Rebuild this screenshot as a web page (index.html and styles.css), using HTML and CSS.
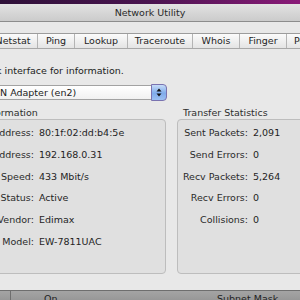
FILE: index.html
```html
<!DOCTYPE html>
<html>
<head>
<meta charset="utf-8">
<link rel="stylesheet" href="styles.css">
</head>
<body>
<div class="desktop"></div>
<div class="titlebar"><span class="title">Network Utility</span></div>
<div class="window-body">
  <div class="tabs">
    <div class="tab tab-netstat">Netstat</div>
    <div class="tab tab-ping">Ping</div>
    <div class="tab tab-lookup">Lookup</div>
    <div class="tab tab-trace">Traceroute</div>
    <div class="tab tab-whois">Whois</div>
    <div class="tab tab-finger">Finger</div>
    <div class="tab tab-port">Port Scan</div>
  </div>
  <p class="prompt">k interface for information.</p>
  <div class="popup">
    <span class="popup-text">N Adapter (en2)</span>
    <span class="stepper">
      <svg width="14" height="13" viewBox="0 0 14 13"><path d="M7 2.5 L9.5 5.5 L4.5 5.5 Z" fill="#111"/><path d="M7 10.5 L9.5 7.5 L4.5 7.5 Z" fill="#111"/></svg>
    </span>
  </div>
  <div class="groups">
    <section class="group group-info">
      <div class="group-title">ormation</div>
      <div class="box">
        <div class="row"><span class="label">Hardware Address:</span><span class="value">80:1f:02:dd:b4:5e</span></div>
        <div class="row"><span class="label">IP Address:</span><span class="value">192.168.0.31</span></div>
        <div class="row"><span class="label">Link Speed:</span><span class="value">433 Mbit/s</span></div>
        <div class="row"><span class="label">Link Status:</span><span class="value">Active</span></div>
        <div class="row"><span class="label">Vendor:</span><span class="value">Edimax</span></div>
        <div class="row"><span class="label">Model:</span><span class="value">EW-7811UAC</span></div>
      </div>
    </section>
    <section class="group group-stats">
      <div class="group-title">Transfer Statistics</div>
      <div class="box">
        <div class="row"><span class="label">Sent Packets:</span><span class="value">2,091</span></div>
        <div class="row"><span class="label">Send Errors:</span><span class="value">0</span></div>
        <div class="row"><span class="label">Recv Packets:</span><span class="value">5,264</span></div>
        <div class="row"><span class="label">Recv Errors:</span><span class="value">0</span></div>
        <div class="row"><span class="label">Collisions:</span><span class="value">0</span></div>
      </div>
    </section>
  </div>
</div>
<div class="footer">
  <span class="footer-cell footer-first"></span>
  <span class="footer-cell footer-on">On</span>
  <span class="footer-cell footer-mask">Subnet Mask</span>
</div>
</body>
</html>
```
FILE: styles.css
```css
html, body {
  margin: 0;
  padding: 0;
}
body {
  width: 300px;
  height: 300px;
  overflow: hidden;
  background: #e8e8e8;
  font-family: "DejaVu Sans", "Liberation Sans", sans-serif;
  font-size: 9.5px;
  color: #222;
}
.desktop {
  height: 4px;
  background: linear-gradient(90deg, #2e1038 0%, #4a1450 50%, #8a1a78 100%);
}
.titlebar {
  height: 17px;
  border-bottom: 1px solid #8c8c8c;
  background: linear-gradient(#e2e2e2, #cbcbcb);
  display: flex;
  align-items: center;
  justify-content: center;
}
.title {
  color: #2a2a2a;
  line-height: 12px;
}
.window-body {
  display: flex;
  flex-direction: column;
}
.tabs {
  margin-top: 11px;
  margin-left: -11px;
  display: flex;
  height: 14px;
  border-top: 1px solid #9c9c9c;
  border-bottom: 1px solid #a8a8a8;
  background: linear-gradient(#fbfbfb, #e4e4e4);
}
.tab {
  flex: none;
  text-align: center;
  line-height: 14px;
  border-right: 1px solid #b4b4b4;
  white-space: nowrap;
  color: #1e1e1e;
}
.tab-netstat { width: 48px; }
.tab-ping { width: 36px; }
.tab-lookup { width: 52px; }
.tab-trace { width: 64px; }
.tab-whois { width: 46px; }
.tab-finger { width: 46px; }
.tab-port {
  width: 70px;
  text-align: left;
  padding-left: 7px;
  border-right: none;
}
.prompt {
  margin: 16px 0 0 -4px;
  line-height: 12px;
  white-space: nowrap;
}
.popup {
  margin: 8px 0 0 -10px;
  width: 175px;
  height: 13px;
  border: 1px solid #a2a2a2;
  border-radius: 0 4px 4px 0;
  background: linear-gradient(#ffffff, #f1f1f1);
  display: flex;
  align-items: center;
  justify-content: space-between;
}
.popup-text {
  padding-left: 9px;
  line-height: 13px;
  white-space: nowrap;
}
.stepper {
  width: 14px;
  height: 15px;
  margin: -1px -1px -1px 0;
  border: 1px solid #7a73b0;
  border-radius: 0 4px 4px 0;
  background: linear-gradient(#c6dcf8, #7fabea 55%, #9cc0f2);
  display: flex;
  align-items: center;
  justify-content: center;
}
.groups {
  margin-top: 7px;
  display: flex;
  gap: 11px;
}
.group {
  flex: none;
  display: flex;
  flex-direction: column;
}
.group-info {
  margin-left: -100px;
  width: 266px;
}
.group-stats {
  width: 200px;
}
.group-title {
  line-height: 12px;
  color: #2e2e2e;
  white-space: nowrap;
}
.group-info .group-title { padding-left: 95px; }
.group-stats .group-title { padding-left: 6px; }
.box {
  height: 151px;
  border: 1px solid #bdbdbd;
  border-radius: 4px;
  background: #e0e0e0;
  padding-top: 2px;
}
.row {
  display: flex;
  align-items: center;
  height: 21.7px;
  gap: 5px;
  white-space: nowrap;
}
.label {
  flex: none;
  text-align: right;
  color: #2a2a2a;
}
.group-info .label { width: 133px; }
.group-stats .label { width: 70px; }
.value {
  color: #1e1e1e;
}
.footer {
  margin-top: 16px;
  height: 10px;
  border-top: 1px solid #6e6e6e;
  background: linear-gradient(#a4a4a4, #969696);
  display: flex;
  overflow: hidden;
}
.footer-cell {
  flex: none;
  line-height: 14px;
  padding-top: 1px;
  color: #222;
  white-space: nowrap;
}
.footer-first {
  width: 10px;
  border-right: 1px solid #6e6e6e;
}
.footer-on {
  width: 200px;
  padding-left: 33px;
  box-sizing: border-box;
}
.footer-mask {
  padding-left: 6px;
}
```
